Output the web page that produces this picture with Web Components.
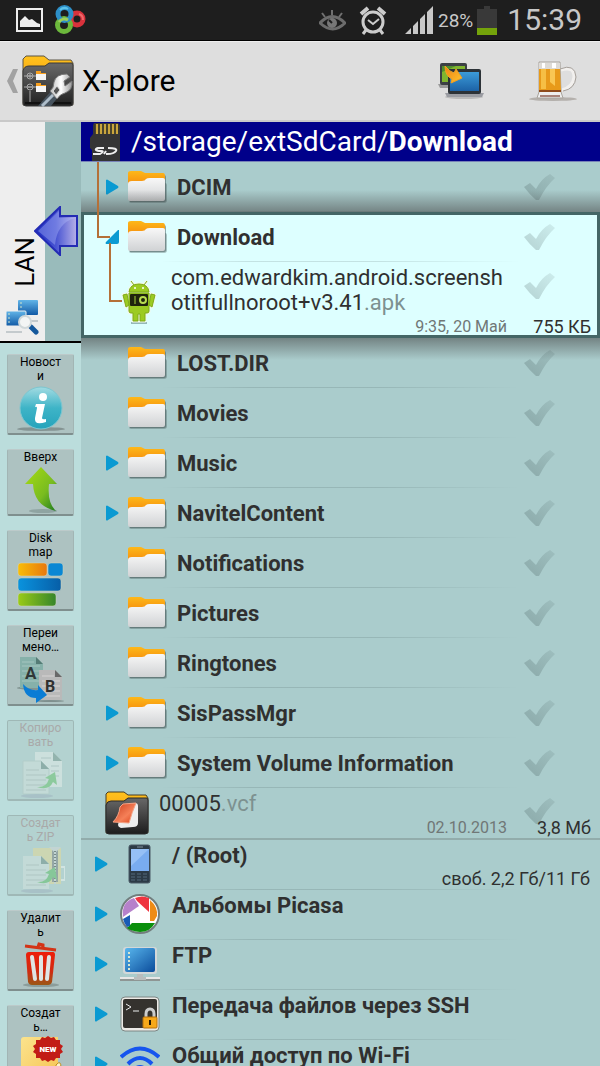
<!DOCTYPE html>
<html lang="ru">
<head>
<meta charset="utf-8">
<meta name="viewport" content="width=device-width, initial-scale=1">
<title>X-plore</title>
<style>
html, body { margin: 0; height: 100%; }
body { font-family: Roboto, "Noto Sans", sans-serif; background: #acc; color: #303030; overflow: hidden; }
</style>
</head>
<body>
<xp-app></xp-app>
<script>
const define = (name, html, setup) => {
  const tpl = document.createElement('template');
  tpl.innerHTML = html;
  customElements.define(name, class extends HTMLElement {
    constructor() {
      super();
      this.attachShadow({ mode: 'open' }).append(tpl.content.cloneNode(true));
    }
    connectedCallback() { if (setup) setup(this, this.shadowRoot); }
  });
};

/* Icon artwork: [width, height, markup] */
const ICONS = {
  picture: [27, 24, '<rect x="1" y="1" width="25" height="22" fill="none" stroke="#eee" stroke-width="2"/><path d="M4 19v-6l5-5 4 4 3-1 5 4 3 1v3z" fill="#eee"/>'],
  rings: [31, 30, '<g fill="none" stroke-width="5"><circle cx="22" cy="14" r="6" stroke="#d8323c"/><circle cx="9" cy="20" r="6.500" stroke="#6cb83c"/><circle cx="9.500" cy="9" r="6.500" stroke="#2d8fc8"/><path d="M4 17a6.500 6.500 0 0 1 9-2" stroke="#9ccf5a" stroke-width="3"/><path d="M5 5a6.500 6.500 0 0 1 8-1" stroke="#5cc2ea" stroke-width="2"/><path d="M24 9a6 6 0 0 1 4 6" stroke="#f0686a" stroke-width="2"/></g>'],
  eye: [27, 21, '<path d="M1 13q12-13 25 0q-12 12-25 0z" fill="none" stroke="#6c6c6c" stroke-width="3"/><circle cx="13" cy="13" r="5" fill="#777"/><path d="M13 13l-3-3" stroke="#1e1e1e" stroke-width="2"/><path d="M3 3l3 4M13 0v5M23 3l-3 4" stroke="#707070" stroke-width="2"/>'],
  alarm: [28, 29, '<g fill="none" stroke="#ccc" stroke-width="3"><circle cx="14" cy="16" r="10"/><path d="M9 14l5 4 6-5" stroke-width="2"/><path d="M2 8l7-6M26 8l-7-6" stroke-width="4"/><path d="M7 24l-3 4M21 24l3 4"/></g>'],
  signal: [28, 28, '<path d="M0 28l6-6v6zM8 20l5-5v13H8zM15 13l5-5v20h-5zM22 6l6-6v28h-6z" fill="#c8c8c8"/>'],
  battery: [20, 29, '<path d="M7 0h6v3h7v26H0V3h7z" fill="#393939"/><path d="M0 22h20v7H0z" fill="#74a30b"/>'],
  back: [11, 24, '<path d="M11 0L6 12l5 12H6L0 12 6 0z" fill="#a2a2a2"/>'],
  app: [52, 52, '<defs><linearGradient id="o" x2="0" y2="1"><stop stop-color="#ffc21d"/><stop offset="1" stop-color="#f28b0c"/></linearGradient><linearGradient id="d" x2="0" y2="1"><stop stop-color="#6a6a6a"/><stop offset="1" stop-color="#202020"/></linearGradient><linearGradient id="w" x2="1"><stop stop-color="#bbb"/><stop offset=".5" stop-color="#fff"/><stop offset="1" stop-color="#999"/></linearGradient></defs><path d="M1 50V4l3-3h18l5 4h22l2 3v42z" fill="url(#o)" stroke="#5b5547"/><path d="M1 16q1-5 6-5h16l4-3h23l1 2v38q0 3-3 3H4q-3 0-3-3z" fill="url(#d)" stroke="#3a3a3a"/><g fill="none" stroke="#aaa"><circle cx="8" cy="21" r="3"/><circle cx="8" cy="32" r="3"/><path d="M2 21h12M2 32h12M8 36v11M6 21h4M8 19v4M6 32h4"/></g><path d="M14 17h4v2h6v6H14zM14 29h4v2h6v6H14z" fill="#f4f4f4"/><path d="M14 16h5v2h5v1H14zM14 28h5v2h5v1H14z" fill="#f8a01f"/><path d="M3 48h46" stroke="#111" stroke-width="2"/><path d="M16 51l14-16 7 6-8 10z" fill="#46525d"/><path d="M20 51l14-14" stroke="#aebdca" stroke-width="3"/><path d="M28 36q4-3 4-9 2-8 13-8l3 3-6 4 1 5 7-5q1 9-7 12-5 1-8 6z" fill="url(#w)" stroke="#777"/><path d="M31 36l4-5 3 4-4 5z" fill="#555" stroke="#ddd"/>'],
  screens: [46, 38, '<defs><linearGradient id="b" x2="0" y2="1"><stop stop-color="#3c9bd8"/><stop offset="1" stop-color="#1c62a6"/></linearGradient><linearGradient id="y" x2="1" y2="1"><stop stop-color="#f07f12"/><stop offset="1" stop-color="#ffc62e"/></linearGradient></defs><path d="M0 22h14v4H2z" fill="#999"/><rect x="2" y="1" width="27" height="22" rx="2" fill="#3c4044"/><path d="M4 4h23v16H4z" fill="#7fb52f"/><path d="M4 20V10l14-6H4z" fill="#4f8f2c"/><ellipse cx="26" cy="35" rx="19" ry="2" fill="#bbb"/><path d="M7 31h39l-2 4H9z" fill="#9a9ca2"/><rect x="10" y="7" width="33" height="25" rx="2" fill="#2c3237"/><path d="M12 10h29v19H12z" fill="url(#b)"/><path d="M7 4q5 6 9 7l2-4 6 9-11 5 1-4Q7 14 7 4z" fill="url(#y)" stroke="#f2a020"/>'],
  beer: [50, 43, '<ellipse cx="25" cy="39" rx="24" ry="2" fill="#b4b0ac"/><path d="M33 10q13-4 13 7-1 10-12 13" fill="none" stroke="#f2f0ee" stroke-width="3"/><path d="M32 9q15-6 16 8-1 12-13 14" fill="none" stroke="#a6a09a"/><path d="M11 2h21l1 30 2 6H9l2-6z" fill="#eee" stroke="#a8a39c"/><path d="M11 9h21l1 21H11z" fill="#e89a1a"/><path d="M13 9h5v20h-5z" fill="#f6bf45"/><path d="M22 7h5v19l-5-4z" fill="#f9c653"/><path d="M11 3h21v6H11z" fill="#dddad6"/><path d="M14 3h3v5h-3zM24 3h4v5h-4z" fill="#fff"/><path d="M11 30h22v2H11z" fill="#8e4a1c"/><path d="M12 36h20" stroke="#a8837a" stroke-width="2"/>'],
  sd: [30, 38, '<path d="M4 0h24l2 2v36H2V27l-2-2V15l3-4V2z" fill="#353535"/><path d="M5 1h23v10H5z" fill="#4a442c"/><path d="M6 1h2v10H6zM10 1h2v10h-2zM14 1h2v10h-2zM18 1h2v10h-2zM22 1h2v10h-2zM26 1h2v10h-2z" fill="#c9a53d"/><path d="M14 25H8q-3 1-2 2t5 1-1 3H3M14 31l2-3M18 25q10 0 8 3-2 3-9 3h-1" fill="none" stroke="#eee" stroke-width="2"/>'],
  folder: [40, 34, '<defs><linearGradient id="o" x2="0" y2="1"><stop stop-color="#fdb819"/><stop offset="1" stop-color="#f58a0d"/></linearGradient><linearGradient id="g" x2="0" y2="1"><stop stop-color="#f8f8f8"/><stop offset="1" stop-color="#d0d2d4"/></linearGradient></defs><path d="M3 13h35q2 0 2 2v15q0 3-3 3H4q-2 0-2-2z" fill="#455" fill-opacity=".35"/><path d="M3 5h34q2 0 2 2v23q0 2-2 2H3z" fill="#455" fill-opacity=".5"/><path d="M1 14V3q0-2 3-2h10l4 2h18q2 0 2 3v10z" fill="url(#o)"/><path d="M1 14q0-3 4-3h10q3 0 4-2 1-1 4-1h13q2 0 2 2v19q0 2-2 2H3q-2 0-2-2z" fill="url(#g)"/>'],
  tri: [14, 16, '<path d="M1 1q1-1 2 0l10 6q1 1 0 2L3 15q-1 1-2 0z" fill="#0a9ad2"/>'],
  open: [15, 14, '<path d="M13 0h1v12q0 2-2 2H1q-1-1 0-2z" fill="#0a9ad2"/>'],
  check: [32, 28, '<defs><linearGradient id="c" x1="1" y1="0" x2="0" y2="1"><stop stop-color="#122" stop-opacity=".08"/><stop offset="1" stop-color="#122" stop-opacity=".2"/></linearGradient></defs><path d="M1 14l6-4 6 6Q18 6 27 1l5 4q-9 8-16 22h-3Q7 22 1 14z" fill="url(#c)"/>'],
  android: [36, 44, '<path d="M10 43h16" stroke="#688" stroke-opacity=".6" stroke-width="2"/><g stroke="#f2f8ea" stroke-width="3" stroke-linejoin="round" fill="#9ccb22"><path d="M8 12q1-8 10-8t10 8zM8 13h20v18q0 2-2 2h-2v8h-5v-7h-2v7h-5v-8h-2q-2 0-2-2zM2 15l4-1 2 11-3 2zM34 15l-4-1-2 11 3 2zM10 1l3 4M26 1l-3 4"/></g><g fill="#9ccb22" stroke="#7fab18"><path d="M8 12q1-8 10-8t10 8zM8 13h20v18q0 2-2 2h-2v8h-5v-7h-2v7h-5v-8h-2q-2 0-2-2zM2 15l4-1 2 11-3 2zM34 15l-4-1-2 11 3 2zM10 1l3 4M26 1l-3 4"/></g><circle cx="14" cy="8" r="1" fill="#fff"/><circle cx="22" cy="8" r="1" fill="#fff"/><rect x="9" y="14" width="18" height="12" rx="1" fill="#20240d"/><path d="M14 16v8" stroke="#a5cf3a"/><circle cx="22" cy="20" r="3" fill="none" stroke="#b8dc50" stroke-width="2"/>'],
  vcf: [44, 44, '<defs><linearGradient id="o" x2="0" y2="1"><stop stop-color="#ffc21d"/><stop offset="1" stop-color="#f28b0c"/></linearGradient><linearGradient id="d" x2="0" y2="1"><stop stop-color="#686868"/><stop offset="1" stop-color="#1d1d1d"/></linearGradient><linearGradient id="r" x2="1" y2="1"><stop stop-color="#c93a18"/><stop offset=".6" stop-color="#f58058"/><stop offset="1" stop-color="#d83c12"/></linearGradient></defs><path d="M1 42V3l2-2h16l4 3h18l2 3v35z" fill="url(#o)" stroke="#443c28"/><path d="M1 14q1-4 5-4h13l4-3h19l1 2v31q0 3-3 3H4q-3 0-3-3z" fill="url(#d)" stroke="#2a2a2a"/><path d="M13 34l4-19 13-3q3 0 3 3v17q0 4-5 4l-12 1q-3-1-3-3z" fill="#eee"/><path d="M8 31q6-6 7-15l3-3 13-1q-4 9-7 20z" fill="url(#r)" stroke="#f4a284"/>'],
  phone: [24, 40, '<rect x="1" y="1" width="21" height="38" rx="2" fill="#2c3a46" stroke="#4a5a66"/><path d="M3 5h18v22H3z" fill="#79acf0"/><path d="M3 5h18L3 22z" fill="#96c0f6"/><path d="M3 30h18M3 33h18M3 36h18" stroke="#52687a" stroke-dasharray="4 2"/><path d="M9 3h6" stroke="#81909c"/>'],
  picasa: [40, 40, '<circle cx="20" cy="20" r="19" fill="#fff" stroke="#727e7e" stroke-width="2"/><path d="M3 23Q1 8 14 4l5 8z" fill="#b681cb"/><path d="M15 4q7-3 14 0v14L17 7z" fill="#ef3440"/><path d="M30 6q8 7 7 16l-3 5h-4z" fill="#ee8b16"/><path d="M12 29h23q-5 9-15 9-9-1-13-4z" fill="#0a8f0c"/><path d="M3 25l7-4v11l-3 1q-3-4-4-8z" fill="#1a5bb5"/>'],
  ftp: [40, 36, '<defs><linearGradient id="b" x2="1" y2="1"><stop stop-color="#59b7ee"/><stop offset="1" stop-color="#0b4c9b"/></linearGradient></defs><path d="M0 31h40v4H0z" fill="#8e9694"/><path d="M0 31h40v2H0z" fill="#e7e7e7"/><path d="M17 27h6v4h3v3H14v-3h3z" fill="#b9bdbd"/><rect x="3" y="1" width="34" height="27" rx="3" fill="#d3d8d9"/><rect x="5" y="2" width="30" height="24" rx="2" fill="url(#b)"/><path d="M9 6v18" stroke="#d8e6d0" stroke-width="2" stroke-dasharray="2 2"/>'],
  ssh: [40, 36, '<rect x="1" y="1" width="38" height="34" rx="4" fill="#eceae6" stroke="#7c8684"/><rect x="3" y="3" width="34" height="29" rx="2" fill="#35322e"/><path d="M6 8l5 3-5 3M13 15h6" stroke="#eee" fill="none"/><path d="M26 21v-3q0-5 4-5t4 5v3" fill="none" stroke="#ccc" stroke-width="3"/><rect x="23" y="21" width="14" height="11" rx="1" fill="#f7a81a" stroke="#b8700b"/><path d="M30 24v5" stroke="#291a00" stroke-width="2"/>'],
  wifi: [40, 36, '<g fill="none" stroke="#1655ee" stroke-width="4"><path d="M1 11Q20-6 39 11M8 18Q20 6 32 18M14 24q6-6 12 0"/></g><circle cx="20" cy="31" r="3" fill="#1655ee"/>'],
  bigarrow: [44, 50, '<defs><linearGradient id="a" x2="1"><stop stop-color="#1c2cc0"/><stop offset=".5" stop-color="#4854d2"/><stop offset="1" stop-color="#b8b2e8"/></linearGradient></defs><path d="M1 25L26 1v9h17v30H26v9z" fill="url(#a)" stroke="#232bb4" stroke-width="2"/><path d="M4 25L25 5v7h16q-18 5-20 27z" fill="#b9c5ff" fill-opacity=".35"/>'],
  net: [34, 36, '<defs><linearGradient id="b" x2="0" y2="1"><stop stop-color="#62b5e8"/><stop offset="1" stop-color="#1159a5"/></linearGradient></defs><path d="M1 33h16M24 22h9" stroke="#c4cacd" stroke-width="2"/><rect x="13" y="1" width="20" height="15" rx="1" fill="url(#b)"/><rect x="1" y="12" width="20" height="15" rx="1" fill="url(#b)" stroke="#eee"/><path d="M4 14v10M16 3v7" stroke="#d4e5c8" stroke-dasharray="2 2"/><path d="M26 28l5 5" stroke="#15589c" stroke-width="5" stroke-linecap="round"/><circle cx="20" cy="23" r="6" fill="#f3f5f5" stroke="#d0d8da" stroke-width="2"/>'],
  info: [48, 48, '<defs><linearGradient id="i" x2="0" y2="1"><stop stop-color="#a2dbe2"/><stop offset=".5" stop-color="#3eb4c7"/><stop offset="1" stop-color="#26a3bb"/></linearGradient></defs><ellipse cx="24" cy="45" rx="24" ry="2" fill="#849392"/><circle cx="24" cy="24" r="21" fill="url(#i)" stroke="#7cc6d0"/><circle cx="26" cy="13" r="4" fill="#fff"/><path d="M19 20h9l-3 14q0 2 4 1v3q-12 4-11-4l2-10q0-2-2-1z" fill="#fff"/>'],
  up: [48, 48, '<defs><linearGradient id="g" x2="1" y2="1"><stop stop-color="#a8dc12"/><stop offset=".6" stop-color="#79bc20"/><stop offset="1" stop-color="#1c7a20"/></linearGradient></defs><ellipse cx="26" cy="46" rx="14" ry="2" fill="#8fa4a2"/><path d="M24 2L8 19h8q1 22 23 27-9-8-7-27h8z" fill="url(#g)"/>'],
  disk: [48, 48, '<defs><linearGradient id="o" x2="1"><stop stop-color="#f9bd08"/><stop offset="1" stop-color="#e7780e"/></linearGradient><linearGradient id="b" x2="1"><stop stop-color="#0a93de"/><stop offset="1" stop-color="#075ea7"/></linearGradient><linearGradient id="g" x2="1"><stop stop-color="#9acb18"/><stop offset="1" stop-color="#35852a"/></linearGradient></defs><g stroke="#d4d8bb" stroke-opacity=".5"><rect x="1" y="3" width="29" height="13" rx="3" fill="url(#o)"/><rect x="31" y="3" width="15" height="13" rx="3" fill="#0a87d4"/><rect x="1" y="18" width="43" height="13" rx="3" fill="url(#b)"/><rect x="1" y="33" width="38" height="13" rx="3" fill="url(#g)"/></g>'],
  rename: [48, 48, '<ellipse cx="22" cy="33" rx="22" ry="2" fill="#829492"/><path d="M3 2h16l7 7v24H3z" fill="#86b1aa"/><path d="M19 2v7h7z" fill="#547b75"/><path d="M5 7h12M5 11h18M5 16h18M5 21h18M5 26h18" stroke="#a5c6c0"/><text x="8" y="24" font-family="Roboto" font-weight="700" font-size="17" fill="#303838">A</text><ellipse cx="33" cy="46" rx="14" ry="1" fill="#7f908e"/><path d="M22 15h16l7 7v23H22z" fill="#b9b9b9"/><path d="M38 15v7h7z" fill="#686868"/><path d="M25 21h12M25 26h18M25 31h18M25 36h18M25 41h18" stroke="#d6d3d3"/><text x="28" y="37" font-family="Roboto" font-weight="700" font-size="16" fill="#303030">B</text><path d="M6 29q6 7 15 6v-5l9 10-11 8v-5Q7 43 6 29z" fill="#0a7cd5"/>'],
  copy: [48, 48, '<path d="M18 2h18l9 9v26H18z" fill="#f3f5f2"/><path d="M36 2v9h9z" fill="#65887c"/><path d="M6 11h18l8 8v25H6z" fill="#dce6e2" stroke="#b4c8c2"/><path d="M24 11v8h8z" fill="#567a70"/><path d="M9 20h13M9 25h20M9 30h20M9 35h20M9 40h20M24 8h10M34 16h8M34 21h8M34 26h8" stroke="#a8b8b4"/><ellipse cx="20" cy="46" rx="16" ry="2" fill="#9ab"/><path d="M20 37q9 1 12-8l-4-1 10-6 2 13-4-3q-4 9-16 5z" fill="#54c053"/>'],
  zip: [48, 48, '<path d="M16 3h28v36H16z" fill="#f3dc86"/><path d="M35 3h6v34h-6z" fill="#696969"/><path d="M32 2h12l-5 5v32h-2V7z" fill="#d9d9d9"/><path d="M38 6v31" stroke="#222" stroke-width="2" stroke-dasharray="1 2"/><path d="M44 22h4v13h-4" fill="none" stroke="#fff" stroke-width="2"/><path d="M6 11h18l8 8v25H6z" fill="#dce6e2"/><path d="M24 11v8h8z" fill="#567a70"/><path d="M9 20h13M9 25h20M9 30h20M9 35h20M9 40h20" stroke="#a8b8b4"/><ellipse cx="20" cy="46" rx="16" ry="2" fill="#9ab"/><path d="M20 37q9 1 12-8l-4-1 10-6 2 13-4-3q-4 9-16 5z" fill="#44b948"/>'],
  trash: [48, 48, '<defs><linearGradient id="t" x2="0" y2="1"><stop stop-color="#ee1d08"/><stop offset=".6" stop-color="#cf2c12"/><stop offset="1" stop-color="#9b5816"/></linearGradient></defs><ellipse cx="24" cy="45" rx="18" ry="2" fill="#8b9d9b"/><path d="M8 6l31 4M21 7l1-3 4 1v3" fill="none" stroke="#d33316" stroke-width="3"/><path d="M9 15q0-3 3-3h24q2 0 2 3l-3 27q-1 3-4 3H15q-3 0-4-3z" fill="url(#t)"/><path d="M15 17l3 22M24 17v22M32 17l-2 22" stroke="#dfe5e4" stroke-width="4" stroke-linecap="round"/>'],
  create: [48, 48, '<defs><linearGradient id="y" x2="1" y2="1"><stop stop-color="#fbe38d"/><stop offset="1" stop-color="#f6c250"/></linearGradient></defs><path d="M4 5q0-3 3-3h34v46H4z" fill="url(#y)"/><path d="M39 30q5-6 5 3v6h-5z" fill="#fff4c8" stroke="#bd8a1c"/><path d="M31 1l3 2 3-1 2 3 4 0 0 4 3 2-2 3 2 3-3 2 0 4-4 0-2 3-3-1-3 2-3-2-3 1-2-3-4 0 0-4-3-2 2-3-2-3 3-2 0-4 4 0 2-3 3 1z" fill="#c21c16"/><text x="31" y="17" text-anchor="middle" font-family="Roboto" font-weight="900" font-size="8" fill="#fff">NEW</text>']
};

define('xp-icon', `<style>:host{display:block;flex:none}svg{display:block}</style><div></div>`, (el, root) => {
  const [w, h, art] = ICONS[el.getAttribute('name')];
  root.querySelector('div').innerHTML = `<svg width="${w}" height="${h}" viewBox="0 0 ${w} ${h}" aria-hidden="true">${art}</svg>`;
});

define('xp-status', `<style>
:host{display:flex;align-items:center;height:41px;padding:0 18px 0 16px;background:#1e1e1e;color:#c8c8c8;border-bottom:1px solid #000;box-sizing:border-box}
.space{flex:1}
.rings{margin-left:12px}.alarm{margin-left:13px}.signal{margin-left:18px}
.pct{font-size:19px;margin:0 4px 0 5px}
time{font-size:30px;line-height:40px;margin-left:10px}
</style>
<xp-icon name="picture"></xp-icon><xp-icon class="rings" name="rings"></xp-icon><span class="space"></span>
<xp-icon name="eye"></xp-icon><xp-icon class="alarm" name="alarm"></xp-icon><xp-icon class="signal" name="signal"></xp-icon>
<span class="pct">28%</span><xp-icon name="battery"></xp-icon><time>15:39</time>`);

define('xp-header', `<style>
:host{display:flex;align-items:center;height:81px;box-sizing:border-box;padding:0 22px 0 7px;background:#dedede;border-top:1px solid #eee;border-bottom:2px solid #c9c9c9}
button{border:0;padding:0;background:none;display:flex;align-items:center;cursor:pointer}
.home{gap:4px}
h1{margin:0 0 0 8px;font-size:30px;line-height:40px;font-weight:400;color:#000;flex:1}
.act{width:50px;height:50px;justify-content:center}
.act+.act{margin-left:42px}
</style>
<button class="home" aria-label="Назад"><xp-icon name="back"></xp-icon><xp-icon name="app"></xp-icon></button><h1>X-plore</h1>
<button class="act" aria-label="Панели"><xp-icon name="screens"></xp-icon></button>
<button class="act" aria-label="Пиво"><xp-icon name="beer"></xp-icon></button>`);

define('xp-tool', `<style>
:host{display:block;flex:none}
button{display:flex;flex-direction:column;align-items:center;width:100%;box-sizing:border-box;border:1px solid #a2b5b4;border-top-color:#bccaca;border-bottom:2px solid #7f8f8e;border-radius:2px;padding:0 0 1px;background:#adc2c1;font:12px/14px Roboto,sans-serif;color:#000;cursor:pointer}
button:disabled{color:#a9a9a9;background:#b3d2d0;border-color:#9fb8b6}
button:disabled xp-icon{opacity:.4}
span{white-space:pre-line;padding-bottom:1px}
</style><button><span><slot></slot></span><xp-icon></xp-icon></button>`, (el, root) => {
  root.querySelector('button').disabled = el.hasAttribute('off');
});

define('xp-side', `<style>
:host{display:flex;flex-direction:column;width:81px;background:#bbdddc;overflow:hidden;min-height:0}
.tab{position:relative;flex:none;display:flex;flex-direction:column;align-items:center;justify-content:flex-end;gap:12px;height:221px;padding:0 37px 6px 0;box-sizing:border-box;background:linear-gradient(90deg,#eee 45px,#9bb 45px);border:0;border-bottom:2px solid #000;font:26px/30px Roboto,sans-serif;color:#000;width:100%}
.tab span{writing-mode:vertical-rl;transform:rotate(180deg);margin-left:6px}
.arrow{position:absolute;right:3px;top:84px}
nav{display:flex;flex-direction:column;gap:14px;padding:11px 7px 0;overflow:hidden;min-height:0}
</style>
<button class="tab"><span>LAN</span><xp-icon name="net"></xp-icon><xp-icon class="arrow" name="bigarrow"></xp-icon></button>
<nav></nav>`, (el, root) => {
  const nav = root.querySelector('nav');
  [['Новост\nи', 'info'], ['Вверх', 'up'], ['Disk\nmap', 'disk'], ['Переи\nмено…', 'rename'], ['Копиро\nвать', 'copy', 1], ['Создат\nь ZIP', 'zip', 1], ['Удалит\nь', 'trash'], ['Создат\nь…', 'create']].forEach(([text, icon, off]) => {
    const tool = document.createElement('xp-tool');
    tool.textContent = text;
    if (off) tool.setAttribute('off', '');
    tool.shadowRoot.querySelector('xp-icon').setAttribute('name', icon);
    nav.append(tool);
  });
});

define('xp-check', `<style>
:host{display:block;flex:none}
label{display:grid;cursor:pointer}
input,xp-icon{grid-area:1/1}
input{appearance:none;margin:0;width:32px;height:28px}
input:checked+xp-icon{filter:brightness(.4)}
</style><label><input type="checkbox" aria-label="Отметить"><xp-icon name="check"></xp-icon></label>`);

/* One line of the tree; kind = folder | file | vcf | mount */
define('xp-row', `<style>
:host{display:block;position:relative}
.row{display:flex;align-items:center;height:50px;box-sizing:border-box;padding:0 45px 0 24px}
.toggle{width:14px;display:flex;justify-content:center;border:0;background:none;padding:0;margin-right:8px;flex:none;cursor:pointer}
.name{flex:1;min-width:0;font-size:22px;line-height:25px;font-weight:700;margin-left:10px}
.icon{display:flex;justify-content:center;flex:none}
.meta{position:absolute;right:9px;bottom:1px;display:flex;justify-content:flex-end;font-size:18px;line-height:20px}
.date{font-size:16px;color:#707776}
.size{width:84px;text-align:right}
.row::after{content:"";position:absolute;left:80px;right:80px;bottom:0;height:1px;background:linear-gradient(90deg,transparent,#233 25%,#233 60%,transparent);opacity:.14}
:host([kind=file]) .row{height:76px;align-items:flex-start;padding:0 45px 0 40px}
:host([kind=file]) .icon{padding-top:18px}
:host([kind=file]) .toggle,:host([kind=vcf]) .toggle{display:none}
:host([kind=file]) .name,:host([kind=vcf]) .name{font-weight:400;white-space:pre-line}
:host([kind=file]) .name{margin-left:14px;padding-top:3px}
:host([kind=file]) xp-check{padding-top:10px}
:host([kind=file]) .row::after{display:none}
:host([kind=vcf]) .row{align-items:flex-start;height:52px;padding:3px 45px 0 24px;border-bottom:2px solid #92acab}
:host([kind=vcf]) xp-check{padding-top:6px}
:host([kind=vcf]) .row::after{display:none}
:host([kind=vcf]) .meta{bottom:2px}
:host([kind=mount]) .row{padding:0 45px 2px 13px}
:host([kind=mount]) .icon{width:40px;margin-left:4px}
:host([kind=mount]) .name{align-self:flex-start;margin-left:12px;padding-top:3px;white-space:nowrap}
:host([kind=mount]) .meta{right:10px}
</style>
<div class="row"><button class="toggle" aria-label="Развернуть"><xp-icon name="tri"></xp-icon></button>
<div class="icon"><slot name="icon"></slot></div><div class="name"><slot></slot></div><xp-check></xp-check></div>
<div class="meta"><span class="date"></span><span class="size"></span></div>`, (el, root) => {
  const $ = (s) => root.querySelector(s);
  if (!el.hasAttribute('expand')) $('.toggle').style.visibility = 'hidden';
  if (el.getAttribute('kind') === 'mount') $('xp-check').remove();
  const date = el.getAttribute('date'), size = el.getAttribute('size');
  if (!size) { $('.meta').remove(); return; }
  $('.size').textContent = size;
  if (date) $('.date').textContent = date;
  else { $('.date').remove(); $('.size').style.width = 'auto'; }
});

define('xp-path', `<style>
:host{display:flex;align-items:center;gap:11px;height:40px;box-sizing:border-box;padding-left:9px;background:#00008a;border-bottom:1px solid #7882b8;color:#fff;font-size:28px;line-height:38px;white-space:nowrap}
</style><xp-icon name="sd"></xp-icon><span><slot></slot></span>`);

define('xp-tree', `<style>
:host{display:block;position:relative;min-width:0;min-height:0;overflow:hidden;background:#acc}
.sel{position:relative;background:#dff;box-shadow:inset 0 0 0 3px #466}
.sel::before,.sel::after{content:"";position:absolute;left:0;right:0;height:22px;pointer-events:none}
.sel::before{bottom:100%;background:linear-gradient(transparent,#4448)}
.sel::after{top:100%;background:linear-gradient(#4448,transparent)}
.lines{position:absolute;left:0;top:40px;pointer-events:none}
</style>
<xp-path>/storage/extSdCard/<b>Download</b></xp-path>
<div class="a"></div><div class="sel"></div><div class="b"></div>
<svg class="lines" width="46" height="142" fill="none" stroke="#b47038" stroke-width="2" aria-hidden="true"><path d="M17 0v75h12M29 81v58h12"/></svg>`, (el, root) => {
  const $ = (s) => root.querySelector(s);
  const row = (name, icon, attrs = '') => `<xp-row ${attrs}><xp-icon slot="icon" name="${icon}"></xp-icon>${name}</xp-row>`;
  const ext = (s) => `<span style="color:#7d9190">${s}</span>`;
  $('.a').innerHTML = row('DCIM', 'folder', 'expand');
  $('.sel').innerHTML = row('Download', 'folder', 'expand') +
    row('com.edwardkim.android.screensh\notitfullnoroot+v3.41' + ext('.apk'), 'android', 'kind="file" date="9:35, 20 Май" size="755 КБ"');
  $('.sel xp-row').shadowRoot.querySelector('.toggle').innerHTML = '<xp-icon name="open"></xp-icon>';
  $('.b').innerHTML = [['LOST.DIR'], ['Movies'], ['Music', 1], ['NavitelContent', 1], ['Notifications'], ['Pictures'], ['Ringtones'], ['SisPassMgr', 1], ['System Volume Information', 1]]
    .map(([n, e]) => row(n, 'folder', e ? 'expand' : '')).join('') +
    row('00005' + ext('.vcf'), 'vcf', 'kind="vcf" date="02.10.2013" size="3,8 Мб"') +
    row('/ (Root)', 'phone', 'kind="mount" expand size="своб. 2,2 Гб/11 Гб"') +
    [['Альбомы Picasa', 'picasa'], ['FTP', 'ftp'], ['Передача файлов через SSH', 'ssh'], ['Общий доступ по Wi-Fi', 'wifi']]
    .map(([n, i]) => row(n, i, 'kind="mount" expand')).join('');
});

define('xp-app', `<style>
:host{display:grid;grid-template-rows:auto auto minmax(0,1fr);height:100vh;overflow:hidden}
main{display:grid;grid-template-columns:81px minmax(0,1fr);min-height:0}
</style><xp-status></xp-status><xp-header></xp-header><main><xp-side></xp-side><xp-tree></xp-tree></main>`);
</script>
</body>
</html>
